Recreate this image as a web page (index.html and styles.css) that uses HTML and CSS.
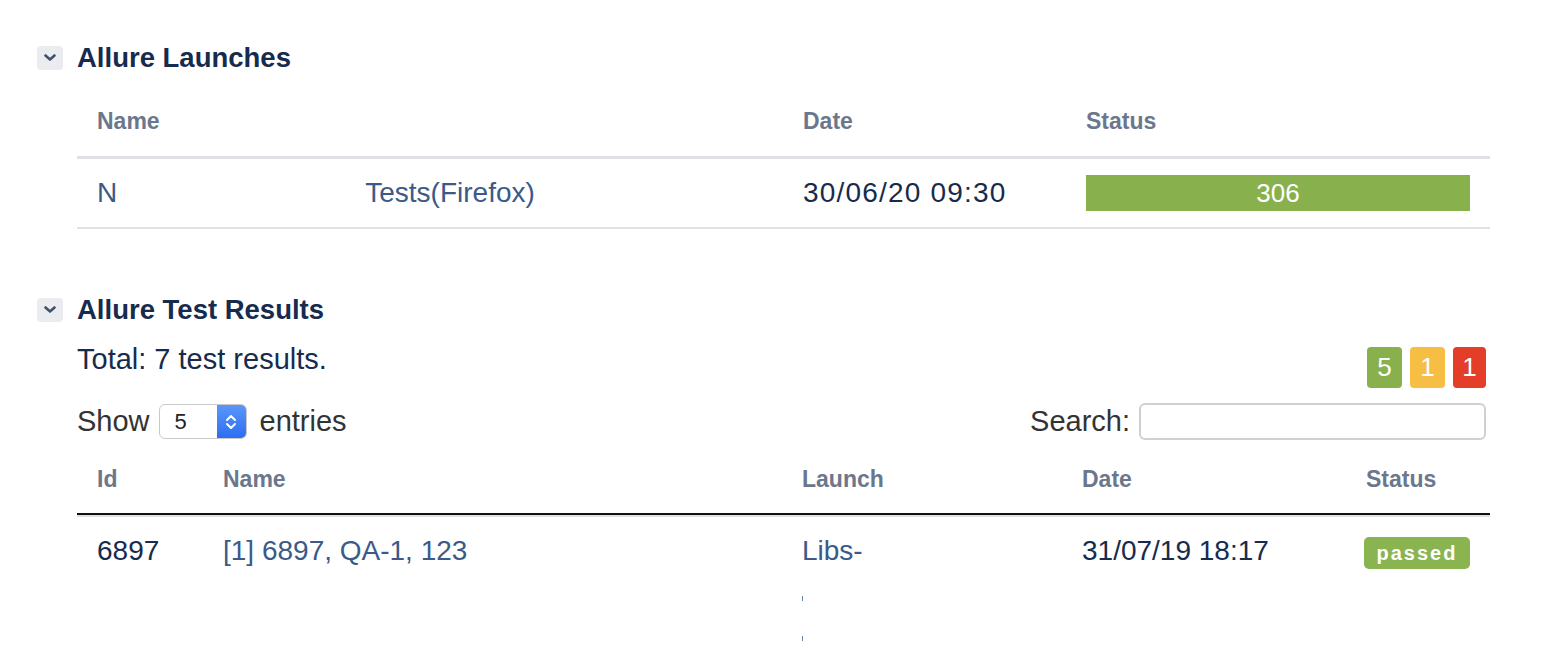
FILE: index.html
```html
<!DOCTYPE html>
<html>
<head>
<meta charset="utf-8">
<link rel="stylesheet" href="styles.css">
</head>
<body>
<div class="page">
  <section class="section">
    <div class="sec-head">
      <span class="toggle"><svg width="12" height="8" viewBox="0 0 12 8"><path d="M1.5 1.5 L6 5.5 L10.5 1.5" fill="none" stroke="#42526e" stroke-width="2.6" stroke-linecap="round" stroke-linejoin="round"/></svg></span>
      <h2 class="sec-title">Allure Launches</h2>
    </div>
    <div class="launches">
      <div class="lrow lhead">
        <div class="cell">Name</div>
        <div class="cell">Date</div>
        <div class="cell">Status</div>
      </div>
      <div class="lrow lbody">
        <div class="cell link name-split"><span>N</span><span class="name-rest">Tests(Firefox)</span></div>
        <div class="cell dark date1">30/06/20 09:30</div>
        <div class="cell"><div class="bar">306</div></div>
      </div>
    </div>
  </section>

  <section class="section second">
    <div class="sec-head">
      <span class="toggle"><svg width="12" height="8" viewBox="0 0 12 8"><path d="M1.5 1.5 L6 5.5 L10.5 1.5" fill="none" stroke="#42526e" stroke-width="2.6" stroke-linecap="round" stroke-linejoin="round"/></svg></span>
      <h2 class="sec-title">Allure Test Results</h2>
    </div>
    <div class="body2">
      <div class="total-row">
        <div class="total">Total: 7 test results.</div>
        <div class="counts">
          <span class="count green">5</span>
          <span class="count orange">1</span>
          <span class="count red">1</span>
        </div>
      </div>
      <div class="controls">
        <div class="show">Show
          <span class="select"><span class="sel-val">5</span><span class="sel-btn"><svg width="14" height="20" viewBox="0 0 14 20"><path d="M3 8 L7 4 L11 8 M3 12 L7 16 L11 12" fill="none" stroke="#fff" stroke-width="2" stroke-linecap="round" stroke-linejoin="round"/></svg></span></span>
          entries</div>
        <div class="search">Search: <span class="input"></span></div>
      </div>
      <div class="results">
        <div class="rrow rhead">
          <div class="cell">Id</div>
          <div class="cell">Name</div>
          <div class="cell">Launch</div>
          <div class="cell">Date</div>
          <div class="cell">Status</div>
        </div>
        <div class="rrow rbody">
          <div class="cell dark">6897</div>
          <div class="cell link">[1] 6897, QA-1, 123</div>
          <div class="cell link launch">Libs-<span class="mark m1"></span><span class="mark m2"></span></div>
          <div class="cell dark">31/07/19 18:17</div>
          <div class="cell"><span class="passed">passed</span></div>
        </div>
      </div>
    </div>
  </section>
</div>
</body>
</html>
```

FILE: styles.css
```css
html, body {
  margin: 0;
  padding: 0;
  background: #fff;
}
body {
  font-family: "Liberation Sans", Arial, sans-serif;
  color: #172b4d;
}
.page {
  padding: 46px 60px 0 37px;
  width: 1453px;
}
.sec-head {
  display: flex;
  align-items: center;
  height: 24px;
}
.toggle {
  width: 26px;
  height: 24px;
  background: #ebecf0;
  border-radius: 4px;
  display: flex;
  align-items: center;
  justify-content: center;
  margin-right: 14px;
}
.sec-title {
  margin: 0;
  font-size: 27.5px;
  font-weight: bold;
  color: #172b4d;
  line-height: 24px;
}
.launches, .body2 {
  margin-left: 40px;
}
.cell {
  padding-left: 20px;
  line-height: 26px;
  font-size: 28px;
  white-space: nowrap;
}
.lrow {
  display: grid;
  grid-template-columns: 706px 283px 424px;
}
.lhead .cell, .rhead .cell {
  font-size: 23px;
  font-weight: bold;
  color: #6b778c;
}
.lhead {
  padding: 38px 0 22px;
  border-bottom: 3px solid #dfe1e6;
}
.lbody {
  padding: 16px 0;
  align-items: center;
  border-bottom: 2px solid #dfe1e6;
}
.link {
  color: #3b5a8a;
}
.dark {
  color: #172b4d;
}
.date1 {
  letter-spacing: 1.2px;
}
.name-split {
  display: flex;
}
.name-rest {
  margin-left: 248px;
}
.bar {
  margin-right: 20px;
  height: 36px;
  background: #88b14e;
  color: #fff;
  font-size: 26px;
  line-height: 36px;
  text-align: center;
}
.second {
  margin-top: 69px;
}
.total-row {
  margin-top: 22px;
  display: flex;
  justify-content: space-between;
  align-items: flex-start;
  padding-right: 4px;
}
.total {
  font-size: 29px;
  line-height: 30px;
  color: #172b4d;
}
.counts {
  display: flex;
  gap: 8px;
  margin-top: 3px;
}
.count {
  width: 35px;
  height: 41px;
  border-radius: 4px;
  color: #fff;
  font-size: 26px;
  line-height: 41px;
  text-align: center;
}
.count.red { width: 33px; }
.green { background: #88b14e; }
.orange { background: #f6bf43; }
.red { background: #e43d28; }
.controls {
  margin-top: 15px;
  display: flex;
  justify-content: space-between;
  align-items: center;
  height: 37px;
  padding-right: 4px;
  font-size: 29px;
  color: #333;
}
.show, .search {
  display: flex;
  align-items: center;
}
.select {
  display: flex;
  width: 88px;
  height: 35px;
  margin: 0 13px 0 9px;
  border: 1px solid #c9c9c9;
  border-radius: 6px;
  overflow: hidden;
  box-sizing: border-box;
  background: #fff;
}
.sel-val {
  flex: 1;
  font-size: 22px;
  line-height: 33px;
  padding-left: 15px;
  color: #222;
}
.sel-btn {
  width: 29px;
  background: linear-gradient(#5b97f9, #2c6ef2);
  display: flex;
  align-items: center;
  justify-content: center;
}
.input {
  width: 347px;
  height: 37px;
  box-sizing: border-box;
  margin-left: 9px;
  border: 2px solid #d0d0d0;
  border-radius: 6px;
}
.rrow {
  display: grid;
  grid-template-columns: 126px 579px 280px 284px 144px;
}
.rhead {
  padding: 26px 0 21px;
  border-bottom: 2px solid #111;
  box-shadow: 0 2px 0 #dfe1e6;
}
.rbody {
  padding-top: 22px;
  align-items: start;
}
.rbody .cell {
  line-height: 28px;
}
.launch {
  display: flex;
  flex-direction: column;
}
.mark {
  display: block;
  width: 1px;
  height: 5px;
  background: #6d86aa;
}
.m1 { margin-top: 31px; }
.m2 { margin-top: 35px; }
.passed {
  display: inline-block;
  margin-left: -2px;
  margin-top: -2px;
  width: 106px;
  height: 32px;
  line-height: 32px;
  border-radius: 5px;
  background: #8ab44f;
  color: #fff;
  font-size: 20px;
  font-weight: bold;
  letter-spacing: 2px;
  text-align: center;
}
```
